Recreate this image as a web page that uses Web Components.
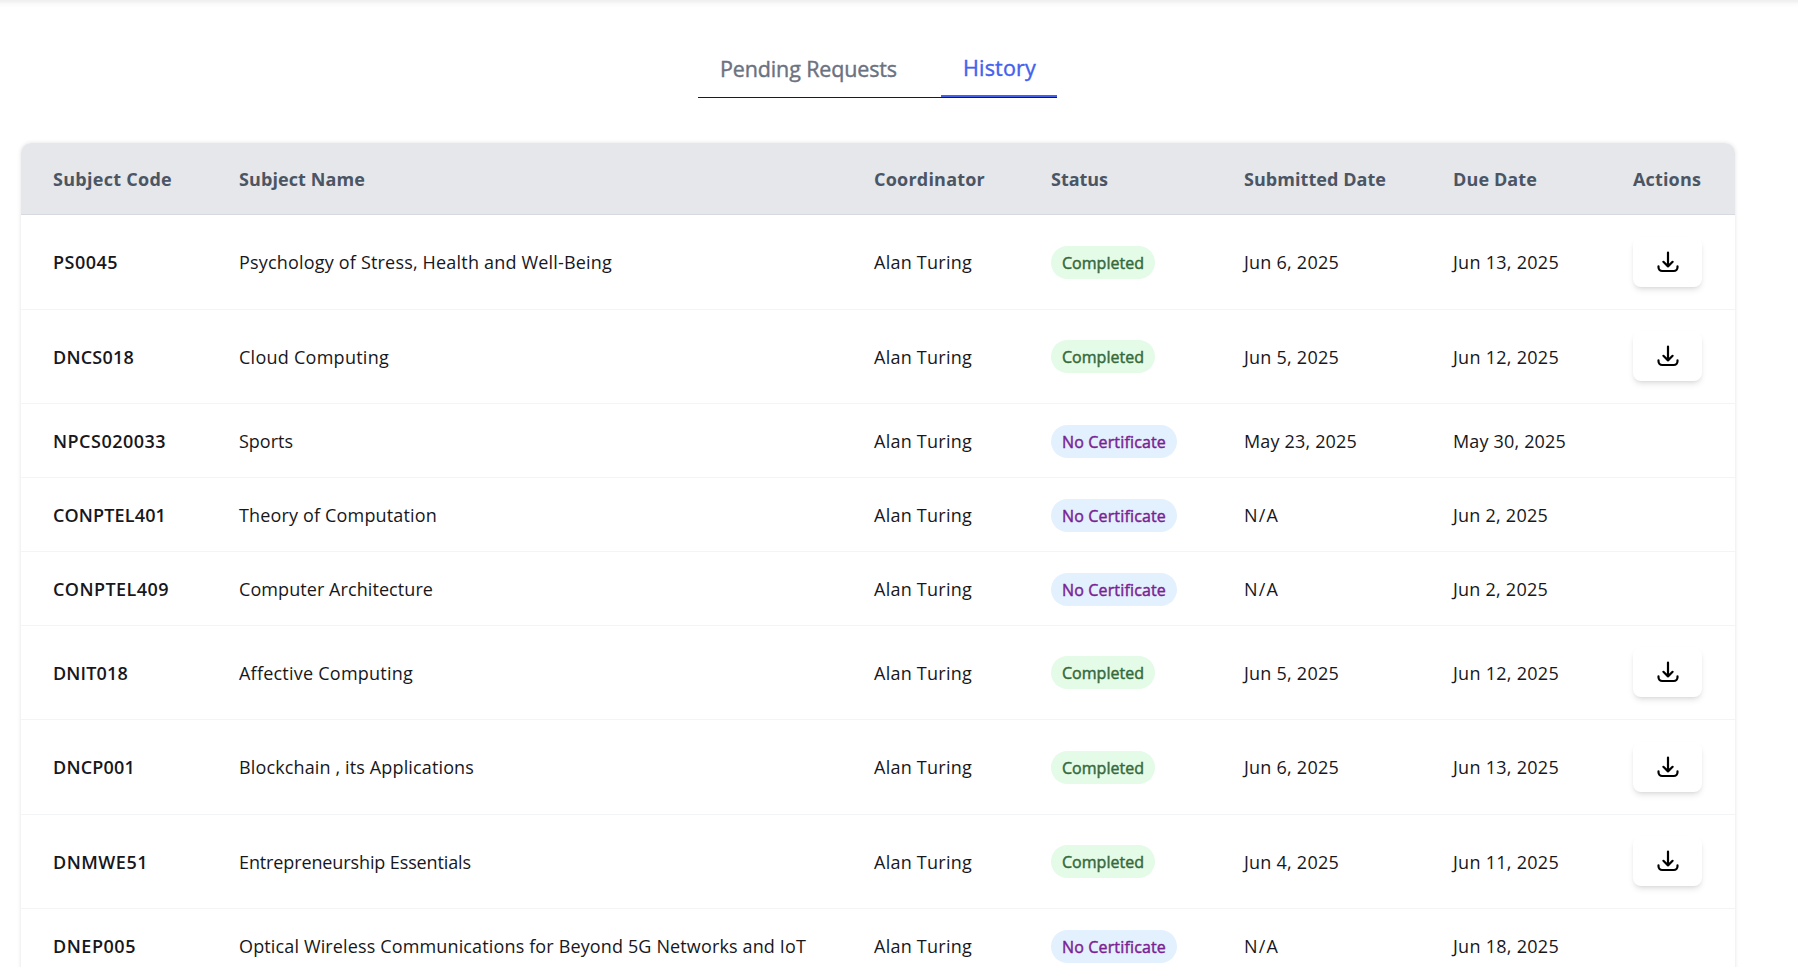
<!DOCTYPE html>
<html lang="en"><head><meta charset="utf-8"><title>History</title>
<style>
body{margin:0;background:#fff;overflow:hidden;font-family:"Open Sans","Noto Sans",sans-serif}
</style></head><body>
<request-page></request-page>
<script>
const make=(name,html,ready)=>customElements.define(name,class extends HTMLElement{
 connectedCallback(){if(this.shadowRoot)return;this.attachShadow({mode:'open'}).innerHTML=html;if(ready)ready.call(this,this.shadowRoot)}
});
/* Single-line label; "w" is the width its letters are tracked to. */
make('fit-text',`<style>:host{display:block;white-space:nowrap}span{display:inline-block}</style><span><slot></slot></span>`,function(root){
 const s=root.querySelector('span'),w=+this.getAttribute('w'),n=this.textContent.length;
 if(w)s.style.letterSpacing=((w-s.getBoundingClientRect().width)/n).toFixed(3)+'px';
});
make('status-badge',`<style>:host{display:flex;width:max-content;height:33px;border-radius:17px;background:#e3fbe7;color:#35693b;font-size:16px;line-height:33px;box-sizing:border-box;padding:1px 11px 0;-webkit-text-stroke:.45px}
:host([kind=none]){background:#e3f0fe;color:#7b1f93;margin-top:1px}</style><slot></slot>`);
make('download-button',`<style>:host{display:block}button{display:flex;align-items:center;justify-content:center;width:69px;height:50px;border:0;border-radius:8px;background:#fff;padding:0;box-shadow:0 4px 6px -1px rgba(0,0,0,.1),0 2px 4px -2px rgba(0,0,0,.1)}svg{width:22px;height:22px;display:block}</style>
<button aria-label="Download"><svg viewBox="0 0 22 22" fill="none" stroke="#000" stroke-width="2.2" stroke-linecap="round" stroke-linejoin="round"><path d="M11 1.6v13.8M6.4 10.8 11 15.4l4.6-4.6"/><path d="M1.5 15.4v.9a3.7 3.7 0 0 0 3.7 3.7h11.6a3.7 3.7 0 0 0 3.7-3.7v-.9"/></svg></button>`);
make('tab-bar',`<style>:host{display:flex;width:359px;height:54px;box-sizing:border-box;border-bottom:1px solid #1b1b22;font-size:21.5px;line-height:30px;-webkit-text-stroke:.4px}
.a,.b{box-sizing:border-box;height:53px}.a{width:243px;padding:10px 0 0 22px;color:#6b7280}.b{width:116px;padding:9px 0 0 22px;color:#4361ee;border-bottom:2px solid #4361ee}</style>
<div class="a"><fit-text w="177">Pending Requests</fit-text></div><div class="b"><fit-text w="73">History</fit-text></div>`);
make('table-row',`<style>:host{display:grid;grid-template-columns:186px 635px 177px 193px 209px 180px 69px;align-items:center;padding-left:32px;box-sizing:border-box;border-bottom:1px solid #f3f4f6;height:var(--h);font-size:18px;line-height:26px;color:#17171c}
:host([head]){background:#e5e7eb;color:#4b5563;font-weight:700;border-bottom-color:#d6d9df}
:host([head]) ::slotted(*){padding-top:1px}</style><slot></slot>`);
make('history-table',`<style>:host{display:block;width:1714px;border-radius:10px;overflow:hidden;background:#fff;box-shadow:0 0 4px rgba(0,0,0,.12)}.code{font-weight:600}.up{margin-bottom:1px}</style><div></div>`,function(root){
 const t=(s,w,c='')=>`<fit-text class="${c}" w="${w}">${s}</fit-text>`;
 const row=(h,code,cw,name,nw,done,sub,sw,due,dw)=>`<table-row style="--h:${h}px">${t(code,cw,'code')}${t(name,nw)}${t('Alan Turing',98)}<status-badge kind="${done?'done':'none'}">${done?t('Completed',82):t('No Certificate',104)}</status-badge>${t(sub,sw)}${t(due,dw)}${done?`<download-button class="${h===94?'up':''}"></download-button>`:''}</table-row>`;
 root.querySelector('div').innerHTML=`<table-row head style="--h:72px">${t('Subject Code',119)}${t('Subject Name',126)}${t('Coordinator',111)}${t('Status',57)}${t('Submitted Date',142)}${t('Due Date',84)}${t('Actions',68)}</table-row>`+
 row(95,'PS0045',65,'Psychology of Stress, Health and Well-Being',373,1,'Jun 6, 2025',95,'Jun 13, 2025',106)+
 row(94,'DNCS018',81,'Cloud Computing',150,1,'Jun 5, 2025',95,'Jun 12, 2025',106)+
 row(74,'NPCS020033',113,'Sports',54,0,'May 23, 2025',113,'May 30, 2025',113)+
 row(74,'CONPTEL401',113,'Theory of Computation',198,0,'N/A',35,'Jun 2, 2025',95)+
 row(74,'CONPTEL409',116,'Computer Architecture',194,0,'N/A',35,'Jun 2, 2025',95)+
 row(94,'DNIT018',75,'Affective Computing',174,1,'Jun 5, 2025',95,'Jun 12, 2025',106)+
 row(95,'DNCP001',82,'Blockchain , its Applications',235,1,'Jun 6, 2025',95,'Jun 13, 2025',106)+
 row(94,'DNMWE51',95,'Entrepreneurship Essentials',232,1,'Jun 4, 2025',95,'Jun 11, 2025',106)+
 row(74,'DNEP005',83,'Optical Wireless Communications for Beyond 5G Networks and IoT',567,0,'N/A',35,'Jun 18, 2025',106);
});
make('request-page',`<style>:host{display:block;height:967px;overflow:hidden;background:linear-gradient(#efefef,#f3f3f3 2px,#fbfbfb 4px,#fff 8px)}
tab-bar{margin:44px 0 45px 698px}history-table{margin-left:21px}main{display:flow-root}</style><main><tab-bar></tab-bar><history-table></history-table></main>`);
</script></body></html>
